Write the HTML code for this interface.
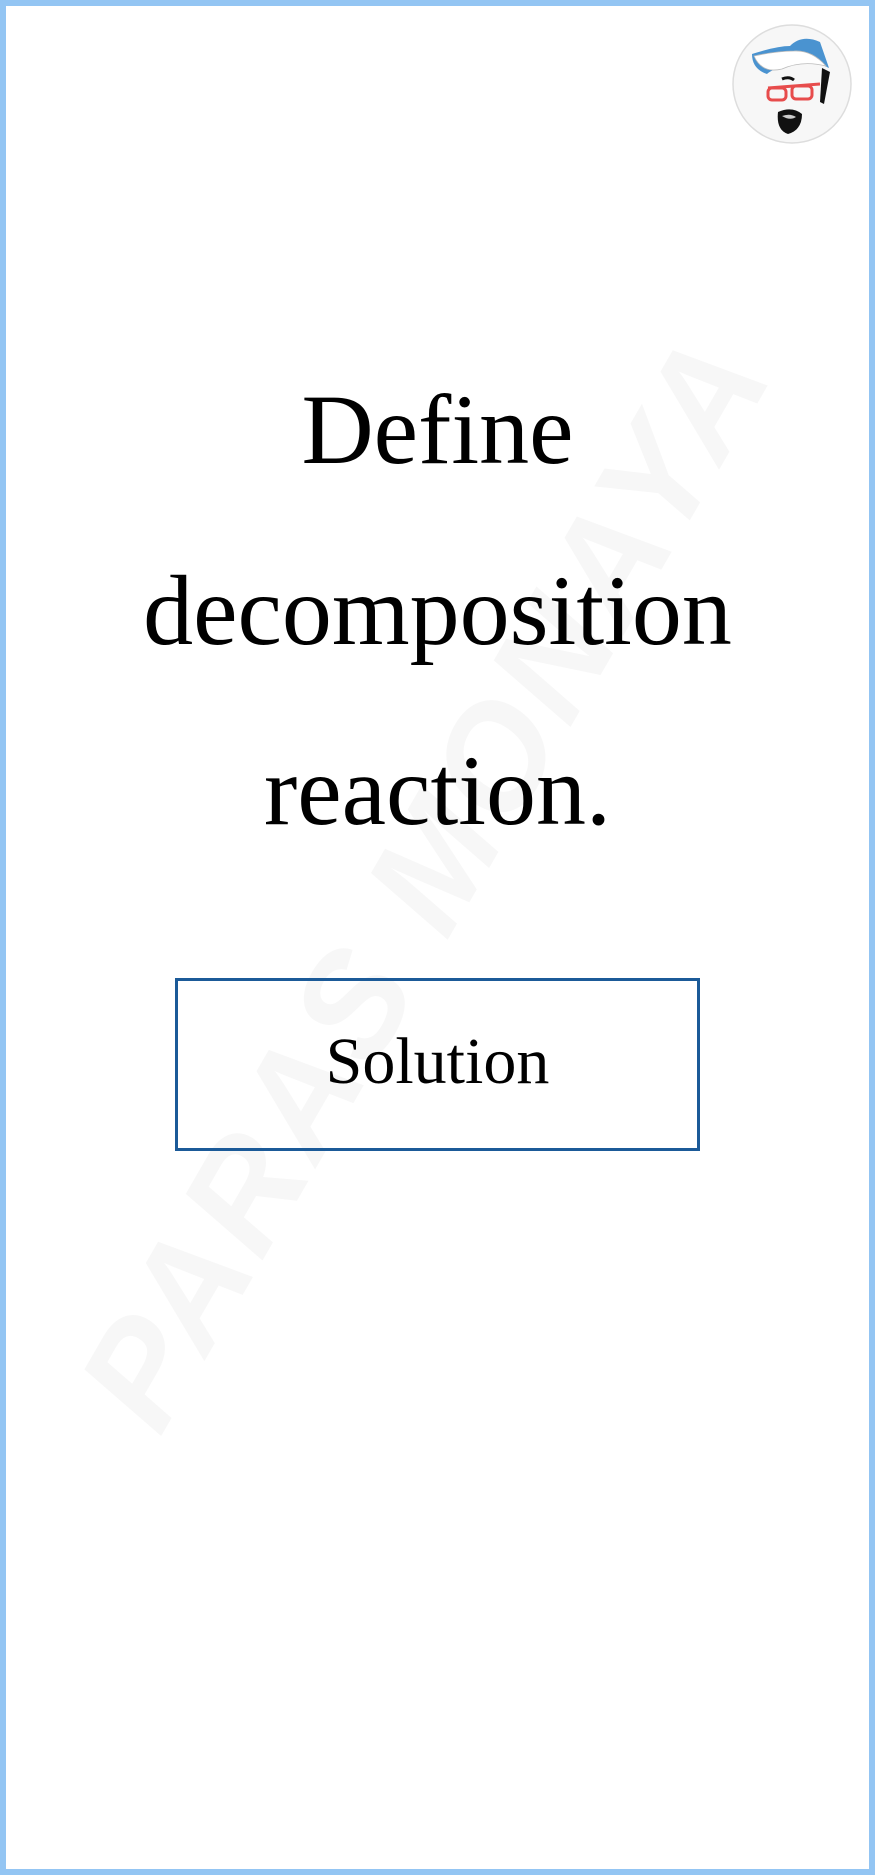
<!DOCTYPE html>
<html><head><meta charset="utf-8"><style>
html,body{margin:0;padding:0;}
body{width:875px;height:1875px;position:relative;background:#fff;overflow:hidden;font-family:"Liberation Serif",serif;}
.frame{position:absolute;left:0;top:0;width:875px;height:1875px;box-sizing:border-box;border:6px solid #93c5f3;}
.wm{position:absolute;left:425px;top:880px;transform:translate(-50%,-50%) rotate(-60deg);font-family:"Liberation Sans",sans-serif;font-weight:bold;font-style:italic;font-size:145px;color:#f7f7f7;white-space:nowrap;letter-spacing:6px;}
.line{position:absolute;left:0;width:875px;text-align:center;font-size:100px;line-height:1;color:#000;}
.box{position:absolute;left:175px;top:978px;width:525px;height:173px;box-sizing:border-box;border:3px solid #1b5a98;}
.sol{position:absolute;left:0;width:875px;text-align:center;font-size:66px;top:1029px;line-height:1;}
</style></head><body>
<div class="wm">PARAS MONAYA</div>
<div class="frame"></div>
<svg style="position:absolute;left:732px;top:24px" width="120" height="120" viewBox="0 0 120 120">
<circle cx="60" cy="60" r="59" fill="#f7f7f7" stroke="#ddd" stroke-width="1.5"/>
<path d="M20 30 Q45 22 58 22 Q70 10 88 18 L97 44 Q80 35 60 40 Q40 45 35 50 Q20 45 20 30Z" fill="#4a93d0"/>
<path d="M22 32 Q45 27 62 27 Q80 26 94 42 Q70 36 50 45 Q30 50 22 32Z" fill="#fff" stroke="#bbb" stroke-width="0.8"/>
<path d="M90 44 L98 48 L92 80 L88 78Z" fill="#111"/>
<path d="M36 64 L88 60" stroke="#e74c4c" stroke-width="3"/>
<rect x="36" y="64" width="18" height="12" rx="4" fill="none" stroke="#e74c4c" stroke-width="3"/>
<rect x="60" y="62" width="20" height="13" rx="4" fill="none" stroke="#e74c4c" stroke-width="3"/>
<path d="M50 55 Q57 52 62 56" stroke="#111" stroke-width="3" fill="none"/>
<path d="M46 88 Q60 82 70 90 Q70 106 56 110 Q44 106 46 88Z" fill="#111"/>
<path d="M50 92 Q58 89 64 93 Q58 97 50 92Z" fill="#ccc"/>
</svg>
<div class="line" style="top:380px">Define</div>
<div class="line" style="top:561px">decomposition</div>
<div class="line" style="top:741px">reaction.</div>
<div class="box"></div>
<div class="sol">Solution</div>
</body></html>
